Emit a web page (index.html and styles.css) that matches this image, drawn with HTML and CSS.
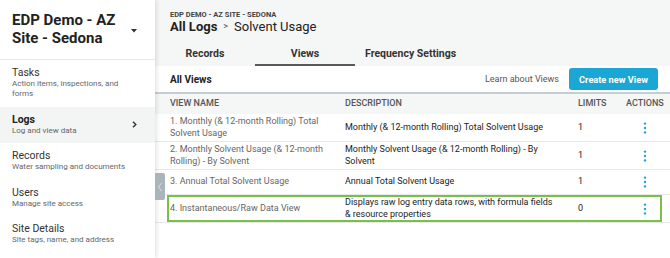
FILE: index.html
```html
<!DOCTYPE html>
<html lang="en">
<head>
<meta charset="utf-8">
<title>Solvent Usage - Views</title>
<link rel="stylesheet" href="styles.css">
</head>
<body>
<div class="app">
  <aside class="sidebar">
    <div class="site-head">
      <div class="site-name">EDP Demo - AZ Site - Sedona</div>
      <svg class="caret" width="6" height="4" viewBox="0 0 6 4"><path d="M0 0H6L3 3.5Z" fill="#333"/></svg>
    </div>
    <nav class="nav">
      <a class="nav-item">
        <div class="nav-text"><div class="nav-title">Tasks</div><div class="nav-sub">Action items, inspections, and forms</div></div>
      </a>
      <a class="nav-item active">
        <div class="nav-text"><div class="nav-title">Logs</div><div class="nav-sub">Log and view data</div></div>
        <svg class="chev" width="5" height="7" viewBox="0 0 5 7"><path d="M1 0.8L3.8 3.5L1 6.2" fill="none" stroke="#333" stroke-width="1.4"/></svg>
      </a>
      <a class="nav-item">
        <div class="nav-text"><div class="nav-title">Records</div><div class="nav-sub">Water sampling and documents</div></div>
      </a>
      <a class="nav-item">
        <div class="nav-text"><div class="nav-title">Users</div><div class="nav-sub">Manage site access</div></div>
      </a>
      <a class="nav-item">
        <div class="nav-text"><div class="nav-title">Site Details</div><div class="nav-sub">Site tags, name, and address</div></div>
      </a>
    </nav>
  </aside>
  <main class="main">
    <header class="page-head">
      <div class="crumb-block">
        <div class="crumb-site">EDP DEMO - AZ SITE - SEDONA</div>
        <h1 class="crumbs"><span class="crumb-strong">All Logs</span><span class="sep">&gt;</span><span>Solvent Usage</span></h1>
      </div>
      <div class="tabs">
        <div class="tab">Records</div>
        <div class="tab active">Views</div>
        <div class="tab">Frequency Settings</div>
      </div>
    </header>
    <div class="toolbar">
      <div class="toolbar-title">All Views</div>
      <div class="toolbar-actions">
        <a class="learn">Learn about Views</a>
        <button class="btn-primary">Create new View</button>
      </div>
    </div>
    <div class="table">
      <div class="row head">
        <div class="cell c-name">View Name</div>
        <div class="cell c-desc">Description</div>
        <div class="cell c-lim">Limits</div>
        <div class="cell c-act">Actions</div>
      </div>
      <div class="row">
        <div class="cell c-name">1. Monthly (&amp; 12-month Rolling) Total Solvent Usage</div>
        <div class="cell c-desc">Monthly (&amp; 12-month Rolling) Total Solvent Usage</div>
        <div class="cell c-lim">1</div>
        <div class="cell c-act"><svg class="kebab" width="4" height="12" viewBox="0 0 4 12"><circle cx="2" cy="1.6" r="1.2"/><circle cx="2" cy="6" r="1.2"/><circle cx="2" cy="10.4" r="1.2"/></svg></div>
      </div>
      <div class="row">
        <div class="cell c-name">2. Monthly Solvent Usage (&amp; 12-month Rolling) - By Solvent</div>
        <div class="cell c-desc">Monthly Solvent Usage (&amp; 12-month Rolling) - By Solvent</div>
        <div class="cell c-lim">1</div>
        <div class="cell c-act"><svg class="kebab" width="4" height="12" viewBox="0 0 4 12"><circle cx="2" cy="1.6" r="1.2"/><circle cx="2" cy="6" r="1.2"/><circle cx="2" cy="10.4" r="1.2"/></svg></div>
      </div>
      <div class="row">
        <div class="cell c-name">3. Annual Total Solvent Usage</div>
        <div class="cell c-desc">Annual Total Solvent Usage</div>
        <div class="cell c-lim">1</div>
        <div class="cell c-act"><svg class="kebab" width="4" height="12" viewBox="0 0 4 12"><circle cx="2" cy="1.6" r="1.2"/><circle cx="2" cy="6" r="1.2"/><circle cx="2" cy="10.4" r="1.2"/></svg></div>
      </div>
      <div class="row highlight">
        <div class="cell c-name">4. Instantaneous/Raw Data View</div>
        <div class="cell c-desc">Displays raw log entry data rows, with formula fields &amp; resource properties</div>
        <div class="cell c-lim">0</div>
        <div class="cell c-act"><svg class="kebab" width="4" height="12" viewBox="0 0 4 12"><circle cx="2" cy="1.6" r="1.2"/><circle cx="2" cy="6" r="1.2"/><circle cx="2" cy="10.4" r="1.2"/></svg></div>
      </div>
    </div>
    <button class="collapse" aria-label="Collapse sidebar"><svg width="6" height="10" viewBox="0 0 6 10"><path d="M4.5 1L1.5 5L4.5 9" fill="none" stroke="#d9e0e2" stroke-width="1"/></svg></button>
  </main>
</div>
</body>
</html>
```

FILE: styles.css
```css
* { box-sizing: border-box; }
html, body { margin: 0; padding: 0; }
body {
  font-family: Roboto, "Liberation Sans", Arial, sans-serif;
  color: #222;
  background: #fff;
  width: 670px;
  height: 258px;
  overflow: hidden;
}
.app {
  display: flex;
  height: 258px;
}
.sidebar {
  width: 155px;
  flex: 0 0 155px;
  background: #fff;
  box-shadow: 1px 0 5px rgba(0, 0, 0, 0.14);
  position: relative;
  z-index: 2;
}
.site-head {
  height: 60px;
  padding: 11px 18px 0 12px;
  display: flex;
  align-items: flex-start;
  justify-content: space-between;
  border-bottom: 1px solid #e6e7e7;
}
.site-name {
  font-size: 15px;
  font-weight: 700;
  line-height: 18px;
  color: #222;
  width: 112px;
}
.caret { margin-top: 18px; }
.nav { display: flex; flex-direction: column; }
.nav-item {
  display: flex;
  align-items: center;
  justify-content: space-between;
  padding: 7.25px 18px 7.25px 12px;
  color: #333;
  text-decoration: none;
}
.nav-item.active { background: #f3f4f4; }
.nav-text { flex: 1; min-width: 0; }
.nav-title {
  font-size: 10.5px;
  line-height: 12px;
  color: #333;
}
.nav-item.active .nav-title { font-weight: 700; color: #222; }
.nav-sub {
  font-size: 8px;
  line-height: 10px;
  color: #666;
}
.chev { margin-top: -1px; }

.main {
  flex: 1;
  position: relative;
  background: #fff;
  min-width: 0;
}
.page-head {
  background: #f5f6f6;
  height: 66px;
  display: flex;
  flex-direction: column;
}
.crumb-block { padding: 9.5px 0 0 15px; }
.crumb-site {
  font-size: 7.5px;
  font-weight: 700;
  line-height: 9px;
  color: #444;
}
.crumbs {
  margin: 0;
  font-size: 13px;
  font-weight: 400;
  line-height: 15px;
  color: #222;
  display: flex;
  align-items: center;
}
.crumb-strong { font-weight: 700; }
.sep {
  font-size: 9px;
  color: #555;
  margin: 0 6px;
}
.tabs {
  display: flex;
  margin-top: 8.5px;
}
.tab {
  min-width: 100px;
  padding: 6px 10px 4px;
  font-size: 10.5px;
  font-weight: 700;
  line-height: 12px;
  color: #333;
  text-align: center;
  border-bottom: 2px solid transparent;
}
.tab.active { border-bottom-color: #585b5c; }

.toolbar {
  height: 28px;
  padding: 0 12px 0 15px;
  display: flex;
  align-items: center;
  justify-content: space-between;
  border-bottom: 2px solid #c5ced0;
}
.toolbar-title {
  font-size: 10px;
  font-weight: 700;
  color: #222;
}
.toolbar-actions {
  display: flex;
  align-items: center;
  gap: 10px;
}
.learn {
  font-size: 9px;
  color: #555;
}
.btn-primary {
  height: 22px;
  width: 89px;
  padding: 0;
  border: 0;
  border-radius: 3px;
  background: #1ba7d6;
  color: #fff;
  font-family: inherit;
  font-size: 9.2px;
  font-weight: 700;
}

.table { display: flex; flex-direction: column; }
.row {
  display: grid;
  grid-template-columns: 190px 233px 48px 1fr;
  align-items: center;
  min-height: 25px;
  padding: 2px 0;
  border-bottom: 1px solid #e8e9e9;
  font-size: 9px;
  line-height: 11.5px;
  position: relative;
}
.row.head {
  background: #f5f6f6;
  min-height: 20px;
  padding: 0;
  border-bottom: 0;
  color: #555;
  font-weight: 500;
  text-transform: uppercase;
}
.c-name { padding: 0 7px 0 15px; color: #666; }
.c-desc { padding-right: 21px; color: #222; }
.c-lim { color: #222; }
.c-act { padding-left: 17px; display: flex; }
.row.head .c-name, .row.head .c-desc, .row.head .c-lim { color: #555; }
.row.head .c-act { padding-left: 0; }
.kebab { fill: #1ea3d8; }
.row.highlight::after {
  content: "";
  position: absolute;
  left: 11.5px;
  right: 8px;
  top: 0;
  bottom: 0;
  border: 2px solid #7bbf4a;
  pointer-events: none;
}
.collapse {
  position: absolute;
  left: 0;
  top: 173px;
  width: 10px;
  height: 27px;
  padding: 0;
  border: 0;
  border-radius: 0 2px 2px 0;
  background: #aab5b9;
  display: flex;
  align-items: center;
  justify-content: center;
  z-index: 3;
}
```
